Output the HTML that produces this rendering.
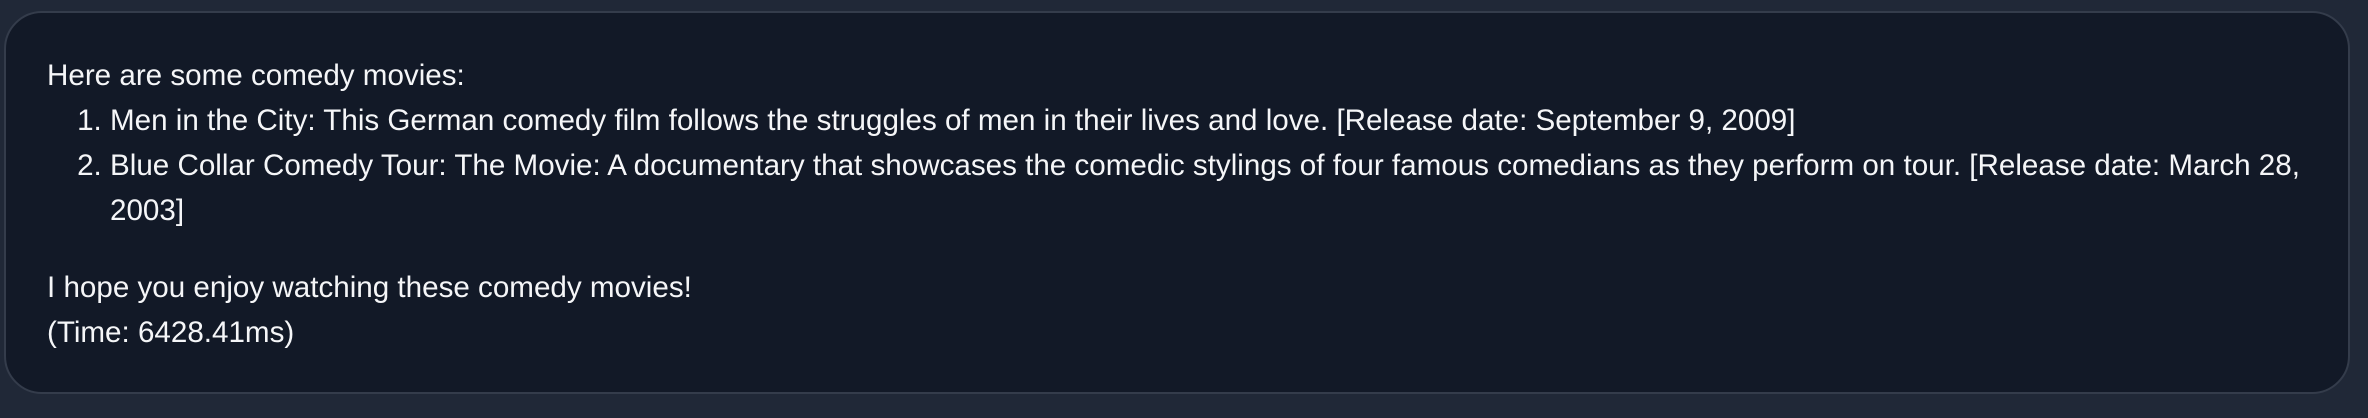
<!DOCTYPE html>
<html><head><style>
html,body{margin:0;padding:0;width:2368px;height:418px;background:#202837;overflow:hidden}
.box{position:absolute;left:4px;top:11px;width:2346px;height:383px;box-sizing:border-box;background:#121927;border:2px solid #343c4b;border-radius:38px;padding:40px 40px 0 41px;color:#f5f6f8;font-family:"Liberation Sans",sans-serif;font-size:29.6px;line-height:45px}
p{margin:0}
ol{margin:0;padding-left:63px}
.gap{margin-top:32px}
</style></head><body>
<div class="box">
<p>Here are some comedy movies:</p>
<ol>
<li>Men in the City: This German comedy film follows the struggles of men in their lives and love. [Release date: September 9, 2009]</li>
<li>Blue Collar Comedy Tour: The Movie: A documentary that showcases the comedic stylings of four famous comedians as they perform on tour. [Release date: March 28, 2003]</li>
</ol>
<p class="gap">I hope you enjoy watching these comedy movies!</p>
<p>(Time: 6428.41ms)</p>
</div>
</body></html>
